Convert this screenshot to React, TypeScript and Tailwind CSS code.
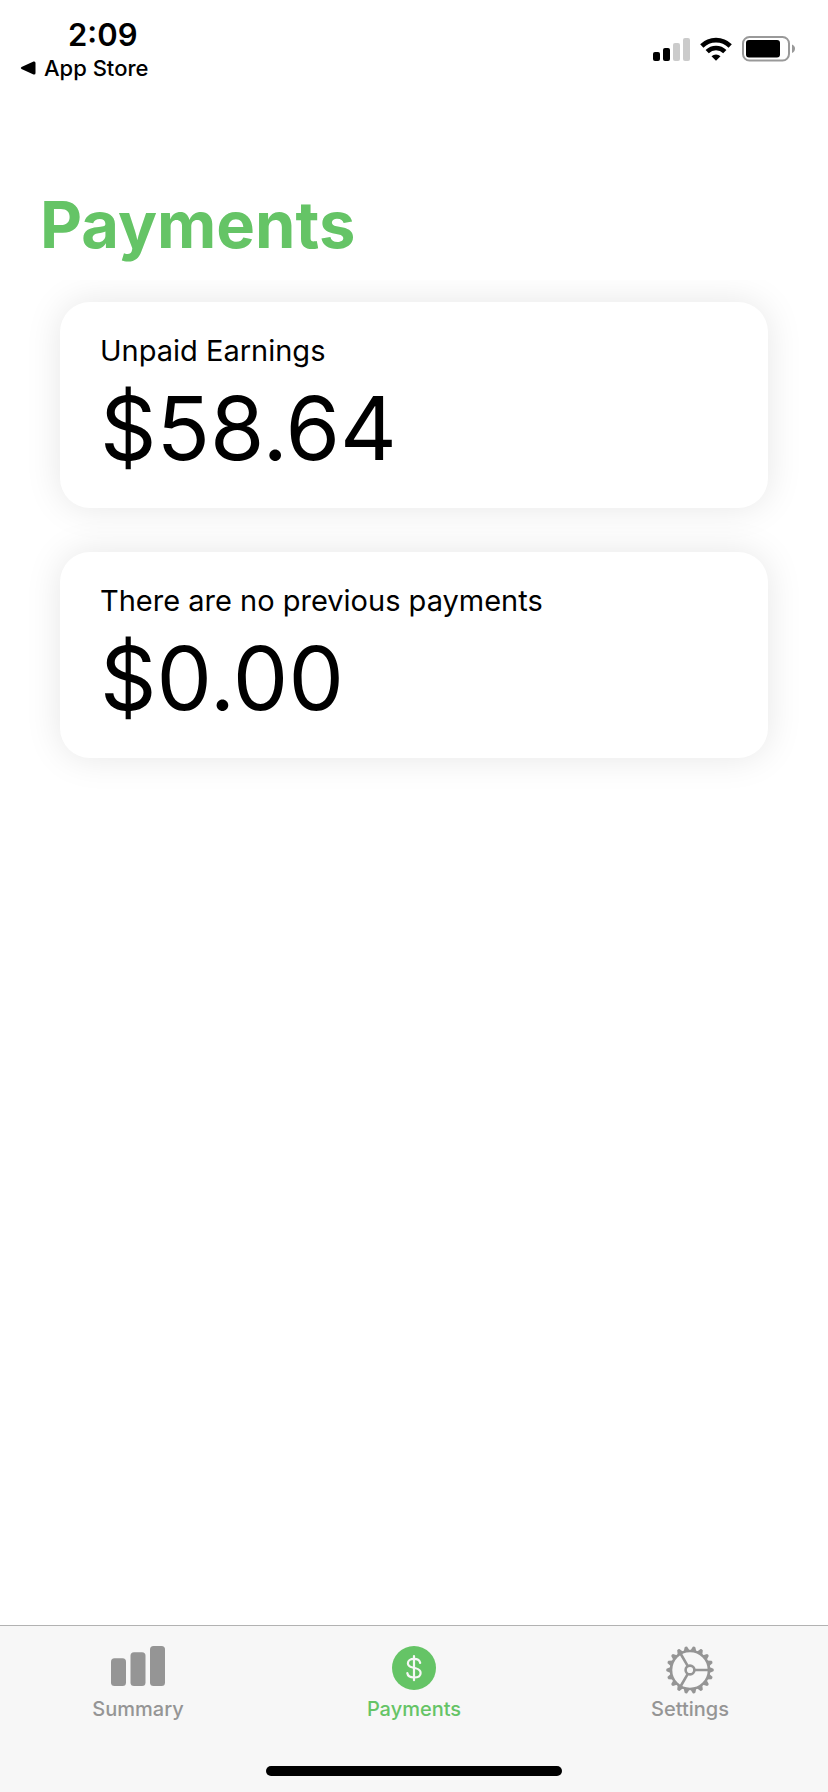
import React from "react";

const TEETH = Array.from({ length: 18 }, (_, i) => i * 20);

function SignalIcon() {
  return (
    <svg width="37" height="23" viewBox="0 0 37 23" aria-hidden="true">
      <rect x="0" y="14" width="7" height="9" rx="2" />
      <rect x="10" y="10" width="7" height="13" rx="2" />
      <rect x="20" y="5" width="7" height="18" rx="2" fill="#cbcbcb" />
      <rect x="30" y="0" width="7" height="23" rx="2" fill="#cbcbcb" />
    </svg>
  );
}

function WifiIcon() {
  return (
    <svg width="32" height="24" viewBox="0 0 32 24" aria-hidden="true">
      <g fill="none" stroke="#000" strokeWidth="4.6">
        <path d="M1.8 9A20.2 20.2 0 0 1 30.2 9" />
        <path d="M7.2 14.6A12.6 12.6 0 0 1 24.8 14.6" />
      </g>
      <path d="M11.5 19.2a6.6 6.6 0 0 1 9 0L16 23.8Z" />
    </svg>
  );
}

function BatteryIcon() {
  return (
    <svg width="54" height="26" viewBox="0 0 54 26" aria-hidden="true">
      <rect x="1" y="1" width="46" height="23.5" rx="6.5" fill="none" stroke="#999" strokeWidth="2" />
      <rect x="4" y="4" width="34" height="17.5" rx="3" />
      <path d="M50 8.5c2 .8 3 2.3 3 4.2s-1 3.4-3 4.2Z" fill="#999" />
    </svg>
  );
}

function BarsIcon() {
  return (
    <svg width="54" height="48" viewBox="0 0 54 48" fill="currentColor" aria-hidden="true">
      <rect x="0" y="12.3" width="15" height="27.7" rx="3.5" />
      <rect x="19.5" y="6.3" width="15" height="33.7" rx="3.5" />
      <rect x="39" y="0" width="15" height="40" rx="3.5" />
    </svg>
  );
}

function DollarIcon() {
  return (
    <svg width="44" height="48" viewBox="0 0 44 48" aria-hidden="true">
      <circle cx="22" cy="22" r="22" fill="currentColor" />
      <g fill="none" stroke="#f7f7f7" strokeWidth="2.2" strokeLinecap="round">
        <path d="M22 10V34.2" />
        <path d="M28.2 17C27.8 14.4 25.5 12.8 22 12.8C18.4 12.8 15.9 14.6 15.9 17.2C15.9 19.6 17.7 20.8 20.7 21.5L23.6 22.2C26.9 23 28.6 24.4 28.6 26.9C28.6 29.7 26 31.5 22 31.5C18.2 31.5 15.7 29.8 15.3 27" />
      </g>
    </svg>
  );
}

function GearIcon() {
  return (
    <svg width="48" height="48" viewBox="0 0 48 48" aria-hidden="true">
      <g fill="none" stroke="currentColor" strokeWidth="2.6">
        <circle cx="24" cy="24" r="19" />
        <circle cx="24" cy="24" r="4.4" />
        <path d="M28.4 24H43M21.8 20.2L14.5 7.5M21.8 27.8L14.5 40.5" />
      </g>
      {TEETH.map((a) => (
        <path key={a} d="M42.8 20.8L47.4 22.7Q48.2 24 47.4 25.3L42.8 27.2Z" fill="currentColor" transform={`rotate(${a} 24 24)`} />
      ))}
    </svg>
  );
}

function AmountCard({ label, amount }: { label: string; amount: string }) {
  return (
    <section className="rounded-[30px] bg-white px-10 pt-[31px] pb-6 shadow-[0_0_36px_rgba(0,0,0,0.1)]">
      <h2 className="text-[29px] leading-9">{label}</h2>
      <p className="pt-1 pb-px text-[88px] leading-[110px]">{amount}</p>
    </section>
  );
}

const tabs = [
  { name: "Summary", Icon: BarsIcon },
  { name: "Payments", Icon: DollarIcon },
  { name: "Settings", Icon: GearIcon },
];

export default function App() {
  return (
    <div className="flex min-h-screen flex-col bg-white font-['Inter',sans-serif] text-black">
      <header className="flex items-start justify-between pt-[17px] pr-8 pl-5">
        <div>
          <div className="pl-12 text-[31px] leading-9 font-semibold">2:09</div>
          <a href="#app-store" className="flex items-center gap-2 text-[22px] leading-[30px] font-medium">
            <svg width="16" height="14" viewBox="0 0 16 14" aria-hidden="true">
              <path d="M1.5 6L13.5 .5Q15.5 0 15.5 2V12Q15.5 14 13.5 13.5L1.5 8Q0 7 1.5 6Z" />
            </svg>
            App Store
          </a>
        </div>
        <div className="flex items-center gap-[10px] pt-[19px]">
          <SignalIcon />
          <WifiIcon />
          <BatteryIcon />
        </div>
      </header>

      <main className="flex-1">
        <h1 className="px-10 pt-[102px] text-[65px] leading-20 font-bold text-[#65c466]">Payments</h1>
        <div className="mt-[15px] flex flex-col gap-11 overflow-hidden px-[60px] pt-[22px] pb-12">
          <AmountCard label="Unpaid Earnings" amount="$58.64" />
          <AmountCard label="There are no previous payments" amount="$0.00" />
        </div>
      </main>

      <nav className="border-t border-[#b2b2b2] bg-[#f7f7f7] pt-5 pb-4">
        <div className="grid grid-cols-3">
          {tabs.map(({ name, Icon }) => (
            <button
              key={name}
              type="button"
              aria-current={name === "Payments" ? "page" : undefined}
              className="flex flex-col items-center gap-[3px] text-[#959595] aria-[current=page]:text-[#65c466]"
            >
              <Icon />
              <span className="text-xl leading-6 font-medium">{name}</span>
            </button>
          ))}
        </div>
        <div className="mx-auto mt-[45px] h-[10px] w-[296px] rounded-full bg-black" />
      </nav>
    </div>
  );
}
